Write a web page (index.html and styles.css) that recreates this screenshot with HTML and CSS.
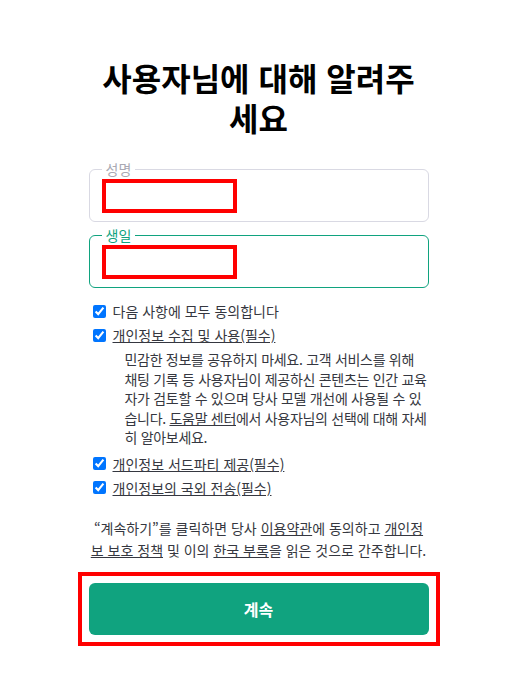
FILE: index.html
```html
<!DOCTYPE html>
<html lang="ko">
<head>
  <meta charset="UTF-8" />
  <meta name="viewport" content="width=device-width, initial-scale=1.0" />
  <title>사용자님에 대해 알려주세요</title>
  <link rel="stylesheet" href="styles.css">
</head>
<body>
  <main class="page">
    <h1 class="title">사용자님에 대해 알려주세요</h1>

    <fieldset class="field">
      <legend>성명</legend>
      <div class="mark"></div>
    </fieldset>
    <fieldset class="field active">
      <legend>생일</legend>
      <div class="mark"></div>
    </fieldset>

    <div class="consents">
      <label class="check"><input type="checkbox" checked> 다음 사항에 모두 동의합니다</label>
      <label class="check"><input type="checkbox" checked> <u>개인정보 수집 및 사용(필수)</u></label>
      <p class="note">민감한 정보를 공유하지 마세요. 고객 서비스를 위해<br>채팅 기록 등 사용자님이 제공하신 콘텐츠는 인간 교육<br>자가 검토할 수 있으며 당사 모델 개선에 사용될 수 있<br>습니다. <u>도움말 센터</u>에서 사용자님의 선택에 대해 자세<br>히 알아보세요.</p>
      <label class="check"><input type="checkbox" checked> <u>개인정보 서드파티 제공(필수)</u></label>
      <label class="check"><input type="checkbox" checked> <u>개인정보의 국외 전송(필수)</u></label>
    </div>

    <p class="terms">“계속하기”를 클릭하면 당사 <u>이용약관</u>에 동의하고 <u>개인정보 보호 정책</u> 및 이의 <u>한국 부록</u>을 읽은 것으로 간주합니다.</p>

    <div class="mark-wide">
      <button class="continue">계속</button>
    </div>
  </main>
</body>
</html>
```

FILE: styles.css
```css
body {
  margin: 0;
  font-family: "Noto Sans CJK KR", "Noto Sans", sans-serif;
  color: #202123;
  background: #fff;
}

.page {
  width: 340px;
  margin: 0 auto;
  padding-top: 57px;
}

.title {
  margin: 0 0 23px;
  padding: 0 12px;
  font-size: 32px;
  line-height: 40px;
  font-weight: 700;
  text-align: center;
  color: #000;
}

.field {
  margin: 0 0 4px;
  padding: 1px 12px 8px;
  border: 1px solid #d9d9e3;
  border-radius: 6px;
}

.field legend {
  padding: 0 4px;
  font-size: 14px;
  line-height: 18px;
  color: #a9a9b3;
}

.field.active {
  border-color: #10a37f;
}

.field.active legend {
  color: #10a37f;
}

.mark {
  width: 127px;
  height: 26px;
  border: 4px solid #ff0000;
}

.consents {
  margin-top: 11px;
  font-size: 14px;
  color: #353740;
}

.check {
  display: flex;
  align-items: center;
  gap: 4px;
  height: 24px;
}

.check input {
  margin: 3px 3px 3px 4px;
}

.note {
  margin: 3px -12px 4px 36px;
  line-height: 19.5px;
  letter-spacing: -0.3px;
  white-space: nowrap;
}

.terms {
  margin: 17px 0 0;
  font-size: 14px;
  line-height: 22px;
  text-align: center;
  color: #353740;
}

.mark-wide {
  margin: 11px -11px 0;
  padding: 7px;
  border: 4px solid #ff0000;
}

.continue {
  display: block;
  width: 100%;
  height: 52px;
  border: none;
  border-radius: 6px;
  background-color: #10a37f;
  color: #fff;
  font-family: inherit;
  font-size: 16px;
  font-weight: 700;
  cursor: pointer;
}
```
